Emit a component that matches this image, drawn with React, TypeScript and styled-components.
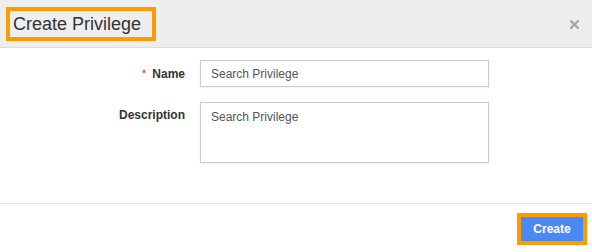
import React from "react";
import styled, { createGlobalStyle } from "styled-components";

const Global = createGlobalStyle`
  html, body { margin: 0; padding: 0; background: #fff; }
  body { font-family: "Liberation Sans", Arial, sans-serif; color: #333; }
  * { box-sizing: border-box; }
`;

const Modal = styled.div`
  width: 592px;
  height: 252px;
  display: flex;
  flex-direction: column;
  background: #fff;
`;

const Header = styled.div`
  height: 48px;
  background: #eeeeee;
  border-bottom: 1px solid #dcdcdc;
  display: flex;
  align-items: flex-start;
  justify-content: space-between;
  padding: 11px 13px 0 10px;
`;

const Title = styled.h4`
  margin: 0;
  width: 142px;
  height: 26px;
  line-height: 26px;
  padding-left: 3px;
  font-size: 18px;
  font-weight: normal;
  color: #333;
  outline: 4px solid #ff9a00;
`;

const Close = styled.button`
  margin-top: 9px;
  padding: 0;
  border: 0;
  background: none;
  width: 9px;
  height: 9px;
  display: flex;
  cursor: pointer;
`;

const Body = styled.div`
  flex: 1;
  padding: 12px 0 0 0;
  display: grid;
  grid-template-columns: 185px 289px;
  column-gap: 15px;
  row-gap: 15px;
  align-content: start;
`;

const Label = styled.label`
  text-align: right;
  font-size: 12px;
  font-weight: bold;
  color: #333;
  padding-top: ${(p: { $top: number }) => p.$top}px;
`;

const Req = styled.span`
  color: #e03c3c;
  font-weight: normal;
  margin-right: 6px;
`;

const Input = styled.input`
  width: 289px;
  height: 27px;
  border: 1px solid #cccccc;
  box-shadow: 0 1px 2px rgba(0, 0, 0, 0.06);
  padding: 0 10px;
  font-family: "Liberation Sans", Arial, sans-serif;
  font-size: 12px;
  color: #555;
  outline: none;
  &::placeholder { color: #555; opacity: 1; }
`;

const TextArea = styled.textarea`
  width: 289px;
  height: 61px;
  border: 1px solid #cccccc;
  box-shadow: 0 1px 2px rgba(0, 0, 0, 0.06);
  padding: 6px 10px;
  font-family: "Liberation Sans", Arial, sans-serif;
  font-size: 12px;
  line-height: 16px;
  color: #555;
  resize: none;
  outline: none;
  &::placeholder { color: #555; opacity: 1; }
`;

const Footer = styled.div`
  height: 49px;
  border-top: 1px solid #e5e5e5;
  display: flex;
  justify-content: flex-end;
  padding: 13px 9px 0 0;
`;

const Button = styled.button`
  width: 62px;
  height: 24px;
  border: 0;
  background: #4a89f3;
  color: #fff;
  font-family: "Liberation Sans", Arial, sans-serif;
  font-size: 12px;
  font-weight: bold;
  outline: 4px solid #ff9a00;
  padding: 0;
`;

export default function App() {
  return (
    <>
      <Global />
      <Modal>
        <Header>
          <Title>Create Privilege</Title>
          <Close aria-label="Close">
            <svg width="9" height="9" viewBox="0 0 9 9">
              <path d="M1 1 L8 8 M8 1 L1 8" stroke="#a9a9a9" strokeWidth="2.4" strokeLinecap="square" />
            </svg>
          </Close>
        </Header>
        <Body>
          <Label $top={7}>
            <Req>*</Req>Name
          </Label>
          <Input placeholder="Search Privilege" />
          <Label $top={6}>Description</Label>
          <TextArea placeholder="Search Privilege" />
        </Body>
        <Footer>
          <Button>Create</Button>
        </Footer>
      </Modal>
    </>
  );
}
